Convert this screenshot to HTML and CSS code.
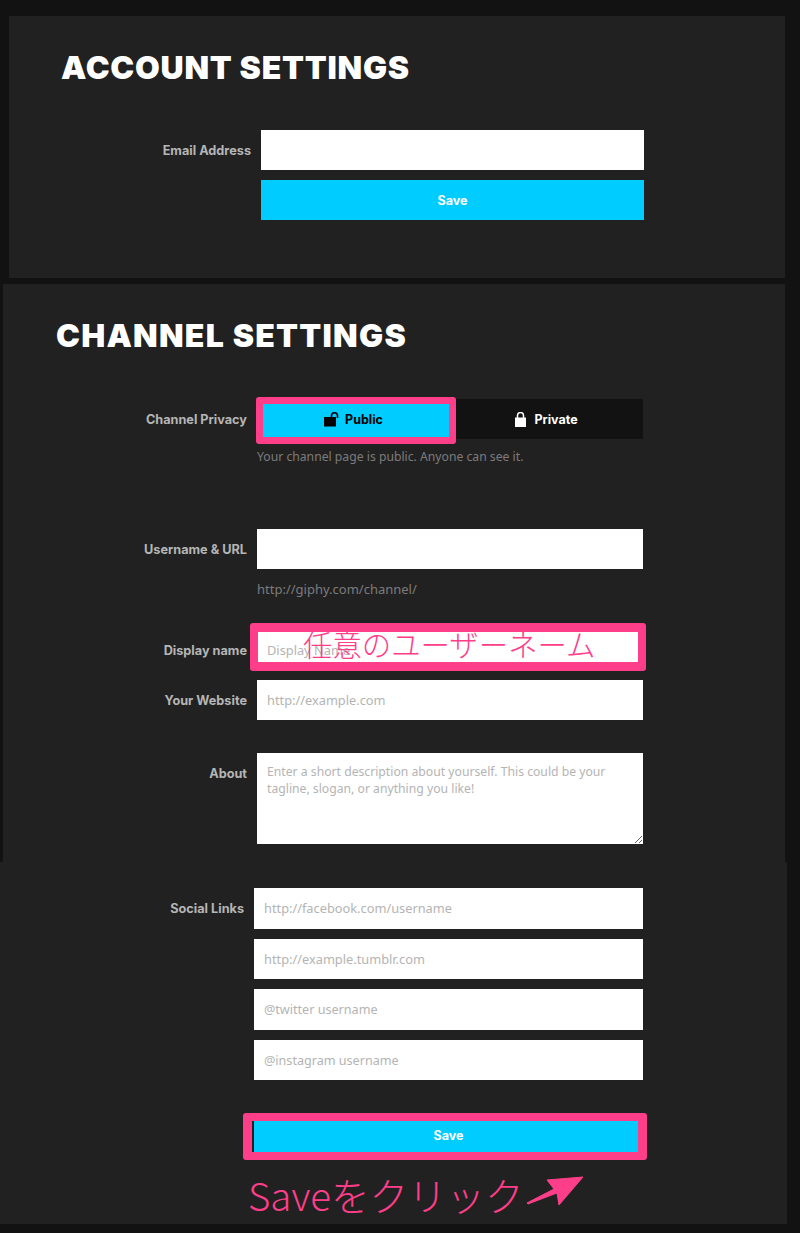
FILE: index.html
```html
<!DOCTYPE html>
<html>
<head>
  <title>Settings</title>
  <meta charset="UTF-8">
  <link rel="stylesheet" href="styles.css">
</head>
<body>
  <section class="panel panel-account">
    <h1>Account Settings</h1>
    <div class="row">
      <label>Email Address</label>
      <input type="text">
    </div>
    <div class="row">
      <span></span>
      <button class="save">Save</button>
    </div>
  </section>

  <section class="panel panel-channel">
    <h1>Channel Settings</h1>
    <div class="row row-hinted">
      <label>Channel Privacy</label>
      <div class="toggle">
        <button class="toggle-btn toggle-on">
          <svg class="lock-open" viewBox="0 0 15 15"><path d="M0 5h12v9.500H0z"/><path d="M7.500 6V3.800a3 3 0 0 1 6 0V6" fill="none" stroke="#000" stroke-width="1.600"/></svg>
          Public
        </button>
        <button class="toggle-btn toggle-off">
          <svg class="lock" viewBox="0 0 11 15"><path d="M0 5.500h11V15H0z"/><path d="M2.500 7V3.500a3 3 0 0 1 6 0V7" fill="none" stroke="#fff" stroke-width="1.500"/></svg>
          Private
        </button>
        <div class="mark mark-public"></div>
      </div>
      <span></span>
      <p class="hint">Your channel page is public. Anyone can see it.</p>
    </div>

    <div class="row row-hinted row-url">
      <label>Username &amp; URL</label>
      <input type="text">
      <span></span>
      <p class="hint">http://giphy.com/channel/</p>
    </div>

    <div class="row">
      <label>Display name</label>
      <div class="field">
        <input type="text" placeholder="Display Name">
        <div class="mark mark-name"></div>
        <div class="note note-name">任意のユーザーネーム</div>
      </div>
    </div>
    <div class="row row-website">
      <label>Your Website</label>
      <input type="text" placeholder="http://example.com">
    </div>
    <div class="row row-about">
      <label>About</label>
      <textarea placeholder="Enter a short description about yourself. This could be your tagline, slogan, or anything you like!"></textarea>
    </div>
  </section>

  <section class="panel panel-social">
    <div class="row">
      <label>Social Links</label>
      <input type="text" placeholder="http://facebook.com/username">
    </div>
    <div class="row">
      <span></span>
      <input type="text" placeholder="http://example.tumblr.com">
    </div>
    <div class="row">
      <span></span>
      <input class="input-handle" type="text" placeholder="@twitter username">
    </div>
    <div class="row row-last">
      <span></span>
      <input class="input-handle" type="text" placeholder="@instagram username">
    </div>
    <div class="row">
      <span></span>
      <div class="field">
        <button class="save">Save</button>
        <div class="mark mark-save"></div>
      </div>
    </div>
    <div class="click-note">
      <span class="note">Saveをクリック</span>
      <svg class="arrow" viewBox="0 0 60 32"><path d="M2 28 L29 14 L22 5 L58 2 L34 30 L32 18 L3 29 Z"/></svg>
    </div>
  </section>
</body>
</html>
```

FILE: styles.css
```css
* { box-sizing: border-box; }

body {
  margin: 0;
  padding-top: 16px;
  height: 1233px;
  overflow: hidden;
  background: #121212;
  font-family: Inter, "Liberation Sans", sans-serif;
}

.panel { background: #212121; }

.panel-account {
  margin: 0 15px 6px 9px;
  padding: 32px 0 48px 52px;
  --label: 190px;
  --input: 383px;
}
.panel-channel {
  margin: 0 15px 0 3px;
  padding: 32px 0 18px 53px;
  --label: 191px;
  --input: 386px;
}
.panel-social {
  margin: 0 13px 0 0;
  padding: 26px 0 0 0;
  height: 362px;
  --label: 244px;
  --input: 389px;
}

h1 {
  margin: 0 0 42px;
  font-size: 32px;
  line-height: 40px;
  font-weight: 900;
  letter-spacing: 0.75px;
  text-transform: uppercase;
  color: #fff;
}
.panel-channel h1 {
  margin-bottom: 43px;
  letter-spacing: 1.25px;
}

.row {
  display: grid;
  grid-template-columns: var(--label) var(--input);
  column-gap: 10px;
  margin-bottom: 10px;
}
.row-hinted { margin-bottom: 63px; }
.row-url { margin-bottom: 32px; }
.row-website { margin-bottom: 33px; }
.row-about { margin-bottom: 0; }
.panel-social .row { margin-bottom: 10.170px; }
.panel-social .row-last { margin-bottom: 35px; }

label {
  height: 40px;
  line-height: 41px;
  text-align: right;
  font-size: 12.700px;
  font-weight: 700;
  color: #b5b5b5;
}

input, textarea {
  display: block;
  width: 100%;
  height: 40px;
  padding: 0 10px;
  border: 0;
  border-radius: 0;
  background: #fff;
  font-family: "Noto Sans", sans-serif;
  font-size: 12.800px;
  color: #333;
}
.panel-social input { height: 40.500px; }
.panel-social .input-handle { font-size: 12.600px; }
textarea {
  height: 91px;
  padding: 10px;
  font-size: 12.200px;
  line-height: 17px;
}
::placeholder { color: #b4b4b4; opacity: 1; }

button {
  border: 0;
  font-family: Inter, "Liberation Sans", sans-serif;
  font-size: 12.500px;
  font-weight: 700;
}

.save {
  display: block;
  width: 100%;
  height: 40px;
  background: #00ccff;
  color: #fff;
}

.toggle {
  position: relative;
  display: grid;
  grid-template-columns: 1fr 1fr;
  height: 40px;
}
.toggle-btn {
  display: flex;
  align-items: center;
  justify-content: center;
  gap: 6px;
}
.toggle-on { background: #00ccff; color: #000; }
.toggle-off { background: #121212; color: #fff; gap: 8px; }
.lock-open { width: 15px; height: 15px; }
.lock { width: 11px; height: 15px; fill: #fff; }

.hint {
  margin: 9px 0 0;
  font-family: "Noto Sans", sans-serif;
  font-size: 12.200px;
  line-height: 18px;
  color: #7c7c7c;
}
.row-url .hint {
  margin-top: 11px;
  font-size: 13px;
}

.field { position: relative; }

/* recuadros rosas de la captura */
.mark {
  position: absolute;
  border: 8px solid #ff3e8a;
  border-radius: 3px;
}
.mark-public {
  top: -2px; left: -1px; width: 200px; height: 47px;
  border-width: 7px;
}
.mark-name {
  top: -7px; left: -7px; right: -3px; bottom: -1px;
  border-width: 9px 8px;
}
.mark-save {
  top: -2.500px; left: -11px; right: -4px; bottom: -4.500px;
  border-width: 8px 9px;
}

.note {
  font-family: "Noto Sans CJK JP", sans-serif;
  font-weight: 300;
  color: #ff3e8a;
}
.note-name {
  position: absolute;
  top: -6px;
  left: 46px;
  font-size: 29.400px;
  line-height: 38px;
  white-space: nowrap;
}

.click-note {
  display: flex;
  align-items: flex-start;
  margin: 3px 0 0 248px;
}
.click-note .note {
  font-size: 38.500px;
  line-height: 56px;
  white-space: nowrap;
}
.arrow {
  width: 60px;
  height: 32px;
  margin: 9px 0 0 2px;
  fill: #ff3e8a;
  stroke: #ff3e8a;
  stroke-linejoin: round;
}
```
